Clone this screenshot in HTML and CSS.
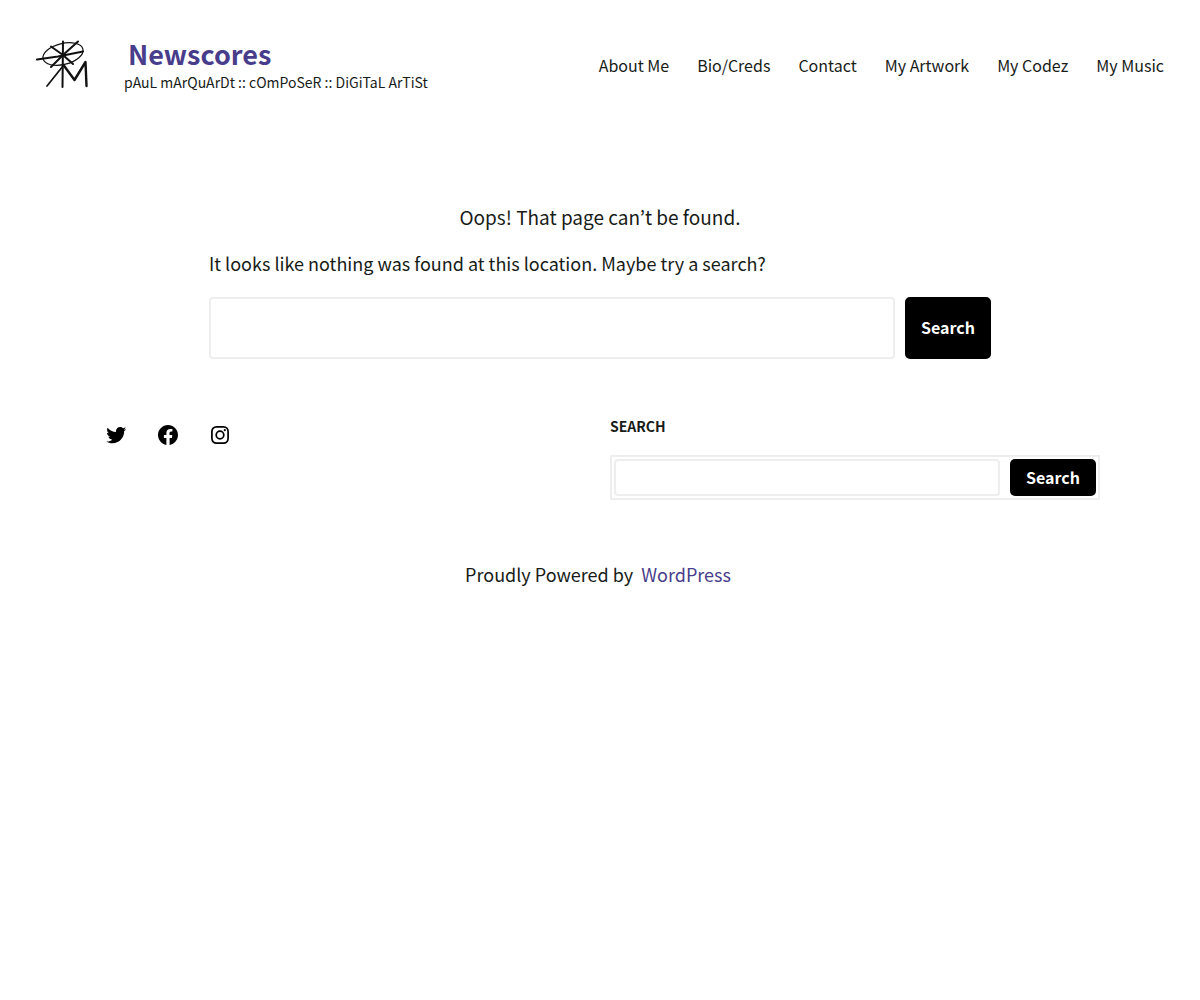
FILE: index.html
```
<!DOCTYPE html>
<html lang="en">
<head>
    <meta charset="UTF-8">
    <meta name="viewport" content="width=device-width, initial-scale=1.0">
    <title>Page not found - Newscores</title>
    <link rel="stylesheet" href="styles.css">
</head>
<body>
    <header class="site-header">
        <div class="branding">
            <a class="logo" href="/" aria-label="Newscores">
                <svg viewBox="0 0 54 50" width="54" height="50" fill="none" stroke="#111" stroke-width="2" stroke-linecap="round" stroke-linejoin="round">
                    <ellipse cx="27" cy="15" rx="20.500" ry="10.500" stroke-width="1.200" transform="rotate(-14 27 15)"/>
                    <path d="M1 20.500 L22 17.500 L47 12.500"/>
                    <path d="M15 7.500 L27 16 L37 25"/>
                    <path d="M42 2.500 L27 16 L15 28"/>
                    <path d="M27 2.500 L26.500 48"/>
                    <path d="M27 27 L11 47" stroke-width="1.700"/>
                    <path d="M27.500 26 L38.500 41 L49.500 23 L50.500 47" stroke-width="2.400"/>
                </svg>
            </a>
            <div>
                <p class="site-title"><a href="/">Newscores</a></p>
                <p class="tagline">pAuL mArQuArDt :: cOmPoSeR :: DiGiTaL ArTiSt</p>
            </div>
        </div>
        <nav class="main-nav">
            <a href="/about">About Me</a>
            <a href="/bio">Bio/Creds</a>
            <a href="/contact">Contact</a>
            <a href="/artwork">My Artwork</a>
            <a href="/codez">My Codez</a>
            <a href="/music">My Music</a>
        </nav>
    </header>

    <main class="content">
        <h1>Oops! That page can’t be found.</h1>
        <p>It looks like nothing was found at this location. Maybe try a search?</p>
        <form class="search-form search-large" action="/">
            <input type="search" name="s" aria-label="Search for">
            <button type="submit">Search</button>
        </form>
    </main>

    <footer>
        <div class="widgets">
            <div class="social">
                <a href="https://twitter.com" aria-label="Twitter">
                    <svg viewBox="0 0 24 24" width="24" height="24"><path d="M22.230 5.924c-.736.326-1.527.547-2.357.646.847-.508 1.498-1.312 1.804-2.270-.793.470-1.671.812-2.606.996C18.324 4.498 17.257 4 16.077 4c-2.266 0-4.103 1.837-4.103 4.103 0 .322.036.635.106.935-3.410-.171-6.433-1.804-8.457-4.287-.353.606-.556 1.311-.556 2.063 0 1.424.724 2.679 1.825 3.415-.673-.021-1.305-.206-1.859-.513v.052c0 1.988 1.414 3.647 3.292 4.023-.344.094-.707.144-1.081.144-.264 0-.521-.026-.772-.074.522 1.630 2.038 2.817 3.833 2.850-1.404 1.100-3.174 1.757-5.096 1.757-.332 0-.660-.020-.979-.057 1.816 1.164 3.973 1.843 6.290 1.843 7.547 0 11.675-6.252 11.675-11.675 0-.178-.004-.355-.012-.531.802-.578 1.497-1.300 2.047-2.124z"/></svg>
                </a>
                <a href="https://facebook.com" aria-label="Facebook">
                    <svg viewBox="0 0 24 24" width="24" height="24"><path d="M12 2C6.500 2 2 6.500 2 12c0 5 3.700 9.100 8.400 9.900v-7H7.900V12h2.500V9.800c0-2.500 1.500-3.900 3.800-3.900 1.100 0 2.200.2 2.200.2v2.500h-1.300c-1.200 0-1.600.8-1.600 1.600V12h2.800l-.4 2.900h-2.300v7C18.300 21.100 22 17 22 12c0-5.500-4.500-10-10-10z"/></svg>
                </a>
                <a href="https://instagram.com" aria-label="Instagram">
                    <svg viewBox="0 0 24 24" width="24" height="24" fill="none" stroke="#000" stroke-width="1.700"><rect x="3.900" y="3.900" width="16.200" height="16.200" rx="4.500"/><circle cx="12" cy="12" r="3.800"/><circle cx="16.800" cy="7.200" r="1.100" fill="#000" stroke="none"/></svg>
                </a>
            </div>
            <div class="widget">
                <label for="footerSearch">SEARCH</label>
                <form class="search-form search-small" action="/">
                    <input type="search" name="s" id="footerSearch">
                    <button type="submit">Search</button>
                </form>
            </div>
        </div>
        <p class="credits">Proudly Powered by <a href="https://wordpress.org">WordPress</a></p>
    </footer>
</body>
</html>
```
FILE: styles.css
```
:root {
    --text-color: #181c18;
    --link-color: #483d8b;
    --border-color: #eee;
}

* {
    box-sizing: border-box;
}

body {
    font-family: "Noto Sans CJK KR", "Open Sans", sans-serif;
    font-size: 18px;
    line-height: 28px;
    color: var(--text-color);
    background-color: #fff;
    margin: 0;
}

h1, p {
    margin: 0;
}

a {
    color: var(--link-color);
    text-decoration: none;
}

svg {
    display: block;
}

.site-header {
    display: flex;
    justify-content: space-between;
    align-items: center;
    padding: 36px;
}

.branding {
    display: flex;
    align-items: center;
    gap: 34px;
}

.site-title {
    padding-left: 4px;
    font-size: 27px;
    font-weight: 700;
    line-height: 36px;
}

.tagline {
    font-size: 14px;
    line-height: 20px;
}

.main-nav {
    display: flex;
    gap: 28px;
    padding-top: 2px;
    font-size: 16px;
}

.main-nav a {
    color: var(--text-color);
}

.content {
    max-width: 782px;
    margin: 75px auto 0;
}

h1 {
    margin-bottom: 18px;
    font-size: 19px;
    font-weight: 400;
    text-align: center;
}

.search-form {
    display: flex;
    gap: 10px;
}

.search-form input {
    flex: 1;
    min-width: 0;
    padding: 0 8px;
    font: inherit;
    border: 2px solid var(--border-color);
    border-radius: 4px;
}

.search-form button {
    padding: 0 16px 2px;
    font-family: inherit;
    font-size: 16px;
    font-weight: 700;
    color: #fff;
    background-color: #000;
    border: none;
    border-radius: 5px;
    cursor: pointer;
}

.search-large {
    height: 62px;
    margin-top: 20px;
}

.widgets {
    display: grid;
    grid-template-columns: 1fr 1fr;
    gap: 20px;
    max-width: 1000px;
    margin: 54px auto 0;
}

.social {
    display: flex;
    gap: 28px;
    padding: 10px 4px;
}

.social a {
    height: 24px;
}

.widget label {
    display: block;
    font-size: 14px;
    font-weight: 700;
    line-height: 26px;
}

.search-small {
    height: 45px;
    margin-top: 16px;
    padding: 2px;
    border: 2px solid var(--border-color);
}

.credits {
    margin-top: 60px;
    text-align: center;
}

.credits a {
    margin: 0 4px;
}
```
